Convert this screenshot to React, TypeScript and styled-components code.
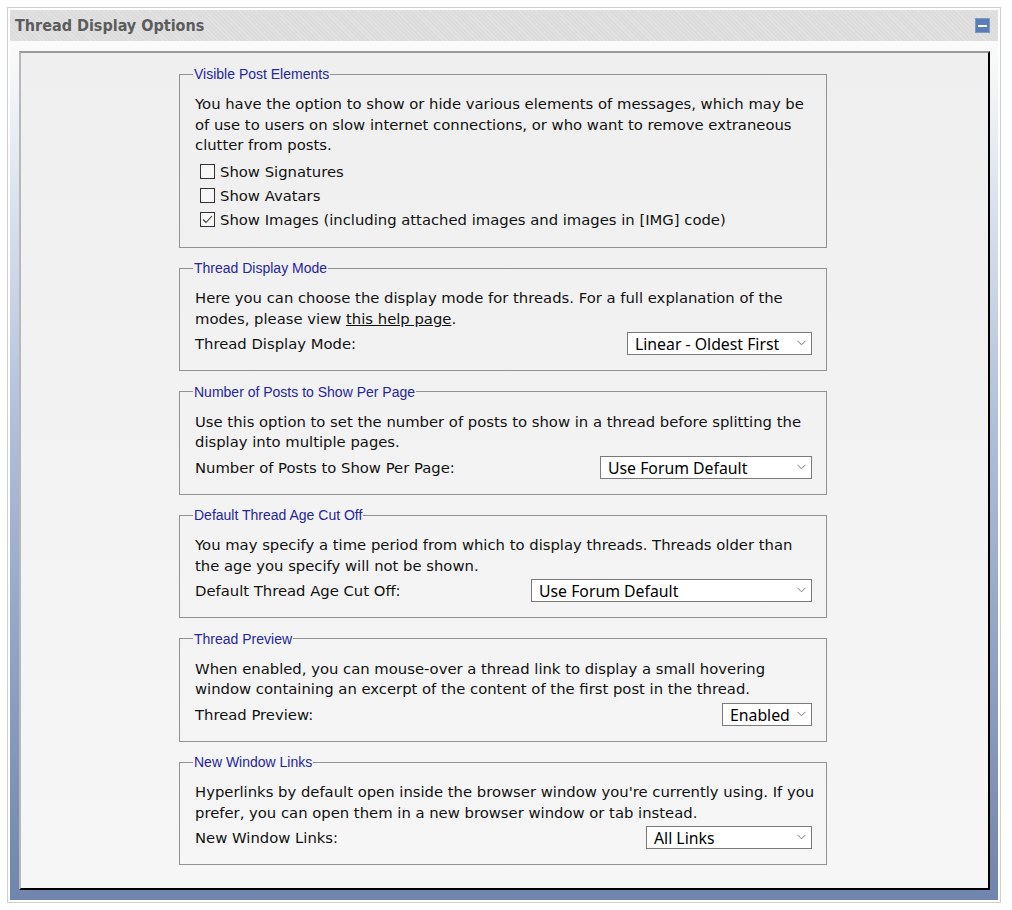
import React from 'react';
import styled, { createGlobalStyle } from 'styled-components';

const GlobalStyle = createGlobalStyle`
  body {
    margin: 0;
    background: #ffffff;
    font-family: "DejaVu Sans", Verdana, sans-serif;
  }
`;

const Panel = styled.div`
  margin: 7px 0 0 7px;
  width: 988px;
  border: 1px solid #cfcfcf;
  padding: 2px;
  background: #ffffff;
`;

const Header = styled.div`
  display: flex;
  align-items: center;
  justify-content: space-between;
  height: 31px;
  padding: 0 8px 0 5px;
  background-color: #dcdcdc;
  background-image: repeating-linear-gradient(
    45deg,
    rgba(255, 255, 255, 0.18) 0,
    rgba(255, 255, 255, 0.18) 1px,
    transparent 1px,
    transparent 3px
  );
`;

const Title = styled.h2`
  margin: 0;
  font-family: "DejaVu Sans Condensed", "DejaVu Sans", sans-serif;
  font-weight: bold;
  font-size: 16px;
  color: #5c5c5c;
`;

const CollapseButton = styled.button`
  display: flex;
  align-items: center;
  justify-content: center;
  width: 15px;
  height: 15px;
  padding: 0;
  border: 1px solid #7f9ac6;
  background: #5b7db5;
  cursor: pointer;

  &::after {
    content: '';
    width: 9px;
    height: 2px;
    background: #ffffff;
  }
`;

const Body = styled.div`
  padding: 10px 8px 10px 9px;
  background: linear-gradient(to bottom, #fbfbfb 0%, #aebfda 45%, #7085ad 100%);
`;

const Inset = styled.div`
  display: flex;
  flex-direction: column;
  align-items: center;
  gap: 12.5px;
  padding: 13px 3px 23px 0;
  border-style: solid;
  border-width: 2px;
  border-color: #9a9a9a #000000 #000000 #b8b8b8;
  background: linear-gradient(to bottom, #efefef, #f6f6f6);
`;

const Fieldset = styled.fieldset`
  box-sizing: border-box;
  width: 648px;
  margin: 0;
  padding: 12px 10px 15px 15px;
  border: 1px solid #929292;
  min-width: 0;
`;

const Legend = styled.legend`
  padding: 0 1px;
  margin-left: -2px;
  font-family: "Liberation Sans", Arial, sans-serif;
  font-size: 14px;
  color: #26269a;
`;

const Description = styled.p`
  margin: 0;
  font-size: 14.8px;
  line-height: 20.5px;
  color: #111111;
`;

const HelpLink = styled.a`
  color: #111111;
  text-decoration: underline;
`;

const CheckList = styled.div`
  display: flex;
  flex-direction: column;
  margin-top: 4px;
`;

const CheckRow = styled.label`
  display: flex;
  align-items: center;
  gap: 5px;
  height: 24px;
  padding-left: 5px;
  font-size: 14.8px;
  color: #111111;
`;

const Box = styled.span`
  display: flex;
  align-items: center;
  justify-content: center;
  box-sizing: border-box;
  width: 15px;
  height: 15px;
  border: 1px solid #333333;
  background: #f7f7f7;
`;

const OptionRow = styled.div`
  display: flex;
  align-items: center;
  justify-content: space-between;
  margin-top: 3px;
  padding-right: 4px;
`;

const OptionLabel = styled.span`
  font-size: 14.8px;
  color: #111111;
`;

const SelectWrap = styled.div<{ $width: number }>`
  position: relative;
  width: ${(p) => p.$width}px;
  height: 23px;
`;

const Select = styled.select`
  appearance: none;
  box-sizing: border-box;
  width: 100%;
  height: 100%;
  padding: 0 20px 0 7px;
  border: 1px solid #7a7a7a;
  border-radius: 0;
  background: #ffffff;
  font-family: "Noto Sans", "Open Sans", sans-serif;
  font-size: 15.8px;
  color: #000000;
  outline: none;
`;

const Chevron = styled.svg`
  position: absolute;
  right: 6px;
  top: 8px;
  pointer-events: none;
`;

function Checkbox({ checked, label }: { checked?: boolean; label: string }) {
  return (
    <CheckRow>
      <Box>
        {checked && (
          <svg width="11" height="9" viewBox="0 0 11 9">
            <path d="M1 4.5 L4 7.5 L10 1" fill="none" stroke="#333" strokeWidth="1.1" />
          </svg>
        )}
      </Box>
      {label}
    </CheckRow>
  );
}

function Dropdown({ width, value, options }: { width: number; value: string; options: string[] }) {
  return (
    <SelectWrap $width={width}>
      <Select defaultValue={value}>
        {options.map((o) => (
          <option key={o}>{o}</option>
        ))}
      </Select>
      <Chevron width="9" height="6" viewBox="0 0 9 6">
        <path d="M0.5 0.8 L4.5 4.8 L8.5 0.8" fill="none" stroke="#666" strokeWidth="0.9" />
      </Chevron>
    </SelectWrap>
  );
}

function Option({ label, width, value, options }: { label: string; width: number; value: string; options: string[] }) {
  return (
    <OptionRow>
      <OptionLabel>{label}</OptionLabel>
      <Dropdown width={width} value={value} options={options} />
    </OptionRow>
  );
}

export default function App() {
  return (
    <>
      <GlobalStyle />
      <Panel>
        <Header>
          <Title>Thread Display Options</Title>
          <CollapseButton aria-label="Collapse" />
        </Header>
        <Body>
          <Inset>
            <Fieldset>
              <Legend>Visible Post Elements</Legend>
              <Description>
                You have the option to show or hide various elements of messages, which may be of use to users on
                slow internet connections, or who want to remove extraneous clutter from posts.
              </Description>
              <CheckList>
                <Checkbox label="Show Signatures" />
                <Checkbox label="Show Avatars" />
                <Checkbox checked label="Show Images (including attached images and images in [IMG] code)" />
              </CheckList>
            </Fieldset>

            <Fieldset>
              <Legend>Thread Display Mode</Legend>
              <Description>
                Here you can choose the display mode for threads. For a full explanation of the modes, please view{' '}
                <HelpLink href="#">this help page</HelpLink>.
              </Description>
              <Option
                label="Thread Display Mode:"
                width={185}
                value="Linear - Oldest First"
                options={['Linear - Oldest First', 'Linear - Newest First', 'Threaded Mode', 'Hybrid Mode']}
              />
            </Fieldset>

            <Fieldset>
              <Legend>Number of Posts to Show Per Page</Legend>
              <Description>
                Use this option to set the number of posts to show in a thread before splitting the display into
                multiple pages.
              </Description>
              <Option
                label="Number of Posts to Show Per Page:"
                width={212}
                value="Use Forum Default"
                options={['Use Forum Default', '5', '10', '20', '30', '40']}
              />
            </Fieldset>

            <Fieldset>
              <Legend>Default Thread Age Cut Off</Legend>
              <Description>
                You may specify a time period from which to display threads. Threads older than the age you specify
                will not be shown.
              </Description>
              <Option
                label="Default Thread Age Cut Off:"
                width={281}
                value="Use Forum Default"
                options={['Use Forum Default', 'Show threads from last day', 'Show threads from last week']}
              />
            </Fieldset>

            <Fieldset>
              <Legend>Thread Preview</Legend>
              <Description>
                When enabled, you can mouse-over a thread link to display a small hovering window containing an
                excerpt of the content of the first post in the thread.
              </Description>
              <Option label="Thread Preview:" width={90} value="Enabled" options={['Enabled', 'Disabled']} />
            </Fieldset>

            <Fieldset>
              <Legend>New Window Links</Legend>
              <Description>
                Hyperlinks by default open inside the browser window you're currently using. If you prefer, you can
                open them in a new browser window or tab instead.
              </Description>
              <Option
                label="New Window Links:"
                width={166}
                value="All Links"
                options={['All Links', 'External Links Only', 'No Links']}
              />
            </Fieldset>
          </Inset>
        </Body>
      </Panel>
    </>
  );
}
